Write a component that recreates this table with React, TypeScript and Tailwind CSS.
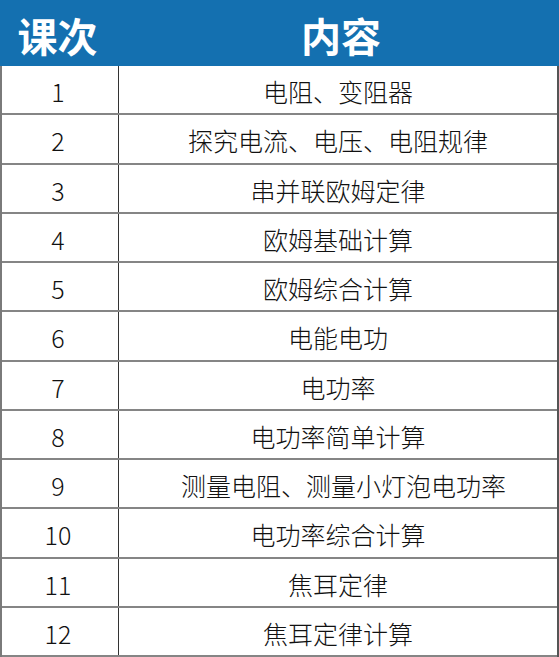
const rows: [string, string][] = [
  ['1', '电阻、变阻器'],
  ['2', '探究电流、电压、电阻规律'],
  ['3', '串并联欧姆定律'],
  ['4', '欧姆基础计算'],
  ['5', '欧姆综合计算'],
  ['6', '电能电功'],
  ['7', '电功率'],
  ['8', '电功率简单计算'],
  ['9', '测量电阻、测量小灯泡电功率'],
  ['10', '电功率综合计算'],
  ['11', '焦耳定律'],
  ['12', '焦耳定律计算'],
];

export default function App() {
  return (
    <div
      className="w-[559px] h-[657px] bg-white text-[#111]"
      style={{ fontFamily: '"Noto Sans CJK SC", "Noto Sans", sans-serif' }}
    >
      <div className="h-[66px] bg-[#1470b0] grid grid-cols-[119px_1fr] items-center text-white font-bold text-[40px] leading-none">
        <div className="text-center pt-1 pr-1">课次</div>
        <div className="text-center pt-1 pl-1">内容</div>
      </div>
      <div className="h-[591px] w-[559px] grid grid-rows-[repeat(12,minmax(0,1fr))] border-l-2 border-r-2 border-l-[#7a7a7a] border-r-[#555]">
        {rows.map(([num, text]) => (
          <div
            key={num}
            className="grid grid-cols-[117px_1fr] border-b-2 border-[#858585] text-[25px] font-light leading-none"
          >
            <div className="flex items-center justify-center border-r border-[#333] pt-1 pr-1">{num}</div>
            <div className={num === '9' ? 'flex items-center justify-center pt-1 pl-[11px]' : 'flex items-center justify-center pt-1'}>
              {text}
            </div>
          </div>
        ))}
      </div>
    </div>
  );
}
